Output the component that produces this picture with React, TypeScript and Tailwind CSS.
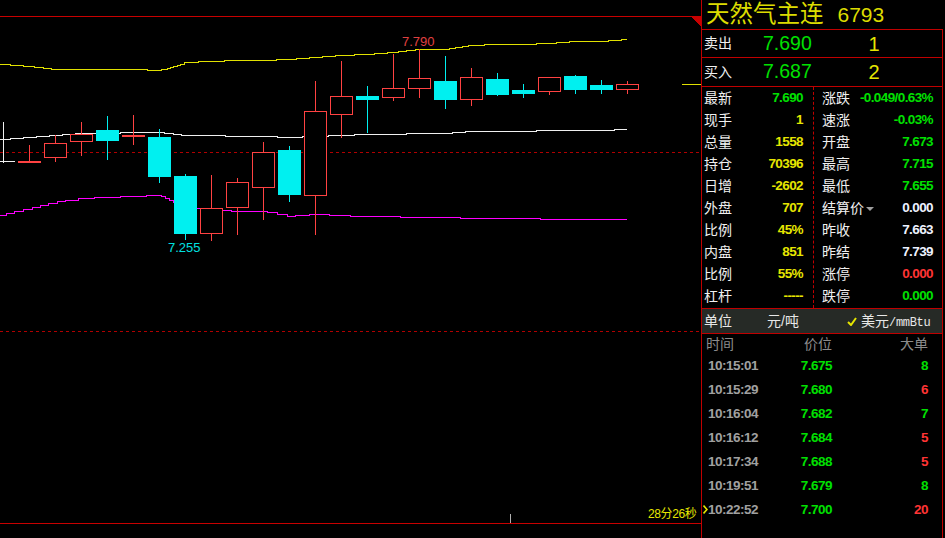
const RED = "#ff4242";
const CYAN = "#00f0f0";

type Candle = { x: number; top: number; bot: number; hi: number; lo: number; c: "r" | "c" };

const candles: Candle[] = [
  { x: 18, top: 161, bot: 163, hi: 145, lo: 162, c: "r" },
  { x: 44, top: 143, bot: 158, hi: 135, lo: 162, c: "r" },
  { x: 70, top: 134, bot: 142, hi: 122, lo: 156, c: "r" },
  { x: 96, top: 130, bot: 141, hi: 116, lo: 160, c: "c" },
  { x: 122, top: 135, bot: 137, hi: 115, lo: 145, c: "r" },
  { x: 148, top: 137, bot: 177, hi: 129, lo: 183, c: "c" },
  { x: 174, top: 176, bot: 234, hi: 174, lo: 240, c: "c" },
  { x: 200, top: 208, bot: 234, hi: 175, lo: 241, c: "r" },
  { x: 226, top: 182, bot: 208, hi: 178, lo: 235, c: "r" },
  { x: 252, top: 152, bot: 188, hi: 142, lo: 220, c: "r" },
  { x: 278, top: 150, bot: 195, hi: 146, lo: 202, c: "c" },
  { x: 304, top: 111, bot: 196, hi: 81, lo: 235, c: "r" },
  { x: 330, top: 96, bot: 115, hi: 61, lo: 138, c: "r" },
  { x: 356, top: 96, bot: 100, hi: 86, lo: 133, c: "c" },
  { x: 382, top: 88, bot: 98, hi: 54, lo: 101, c: "r" },
  { x: 408, top: 78, bot: 89, hi: 49, lo: 98, c: "r" },
  { x: 434, top: 81, bot: 100, hi: 56, lo: 109, c: "c" },
  { x: 460, top: 77, bot: 100, hi: 68, lo: 106, c: "r" },
  { x: 486, top: 79, bot: 95, hi: 73, lo: 96, c: "c" },
  { x: 512, top: 90, bot: 94, hi: 84, lo: 98, c: "c" },
  { x: 538, top: 77, bot: 92, hi: 77, lo: 95, c: "r" },
  { x: 564, top: 76, bot: 90, hi: 75, lo: 94, c: "c" },
  { x: 590, top: 85, bot: 90, hi: 80, lo: 94, c: "c" },
  { x: 616, top: 84, bot: 90, hi: 81, lo: 94, c: "r" },
];

// step segments [x1, x2, row]
const upper: number[][] = [
  [0, 10, 64], [10, 23, 65], [23, 34, 66], [34, 43, 67], [43, 51, 68], [51, 147, 69], [147, 161, 70],
  [161, 167, 69], [167, 170, 68], [170, 173, 67], [173, 177, 66], [177, 180, 65], [180, 184, 64],
  [184, 198, 62], [198, 224, 61], [224, 276, 60], [276, 296, 59], [296, 309, 58], [309, 322, 57],
  [322, 335, 56], [335, 354, 55], [354, 374, 54], [374, 387, 53], [387, 398, 52], [398, 406, 51],
  [406, 415, 50], [415, 449, 49], [449, 455, 48], [455, 462, 47], [462, 468, 46], [468, 484, 45],
  [484, 536, 44], [536, 556, 43], [556, 569, 42], [569, 608, 41], [608, 621, 40], [621, 627, 39],
];
const middle: number[][] = [
  [0, 10, 139], [10, 23, 138], [23, 36, 137], [36, 49, 136], [49, 62, 135], [62, 75, 134], [75, 120, 133],
  [120, 164, 132], [164, 173, 133], [173, 181, 134], [181, 225, 135], [225, 277, 136], [277, 302, 137],
  [302, 328, 136], [328, 354, 135], [354, 406, 134], [406, 452, 133], [452, 465, 132], [465, 536, 131],
  [536, 614, 130], [614, 627, 129],
];
const lower: number[][] = [
  [0, 6, 215], [6, 14, 213], [14, 23, 211], [23, 32, 209], [32, 40, 207], [40, 48, 205], [48, 57, 203],
  [57, 65, 201], [65, 78, 200], [78, 94, 198], [94, 120, 197], [120, 146, 196], [146, 161, 195],
  [161, 165, 196], [165, 169, 198], [169, 173, 200], [173, 177, 202], [177, 181, 204], [181, 185, 206],
  [185, 218, 208], [218, 231, 210], [231, 267, 211], [267, 277, 212], [277, 287, 214], [287, 295, 216],
  [295, 309, 215], [309, 329, 214], [329, 350, 215], [350, 400, 216], [400, 460, 217], [460, 540, 218],
  [540, 627, 219],
];

function steps(segs: number[][]) {
  return segs.map(([a, b, y]) => `${a},${y + 0.5} ${b},${y + 0.5}`).join(" ");
}

function Chart() {
  return (
    <div className="relative h-full w-[701px]">
      <svg width="701" height="538" className="absolute inset-0" shapeRendering="crispEdges">
        <line x1="0" y1="16.5" x2="701" y2="16.5" stroke="#c80000" />
        <polygon points="691,17 701,17 701,27" fill="#c80000" />
        <line x1="0" y1="152.5" x2="701" y2="152.5" stroke="#b00000" strokeDasharray="3 3" />
        <line x1="0" y1="331.5" x2="701" y2="331.5" stroke="#b00000" strokeDasharray="3 3" />
        <line x1="0" y1="523.5" x2="701" y2="523.5" stroke="#c80000" />
        <line x1="510.5" y1="514" x2="510.5" y2="523" stroke="#b0b0b0" />
        <line x1="682" y1="84.5" x2="701" y2="84.5" stroke="#e0e000" />

        <polyline points={steps(upper)} fill="none" stroke="#e0e000" />
        <polyline points={steps(middle)} fill="none" stroke="#f0f0f0" />
        <polyline points={steps(lower)} fill="none" stroke="#ff00ff" />

        <line x1="3.5" y1="122" x2="3.5" y2="163" stroke="#f0f0f0" />
        <line x1="0" y1="161.5" x2="15" y2="161.5" stroke="#f0f0f0" />

        {candles.map((k) => {
          const col = k.c === "r" ? RED : CYAN;
          const doji = k.bot - k.top <= 2;
          return (
            <g key={k.x}>
              <line x1={k.x + 11.5} y1={k.hi} x2={k.x + 11.5} y2={k.lo} stroke={col} />
              {doji || k.c === "c" ? (
                <rect x={k.x} y={k.top} width="23" height={k.bot - k.top} fill={col} />
              ) : (
                <rect
                  x={k.x + 0.5}
                  y={k.top + 0.5}
                  width="22"
                  height={k.bot - k.top - 1}
                  fill="#000"
                  stroke={col}
                />
              )}
            </g>
          );
        })}
      </svg>
      <span className="absolute left-[402px] top-[35px] text-[13px] leading-none text-[#e04040]">7.790</span>
      <span className="absolute left-[168px] top-[241px] text-[13px] leading-none text-[#00e0e0]">7.255</span>
      <span className="absolute left-[648px] top-[508px] text-[12px] leading-none tracking-[-0.4px] text-[#e6e600]">
        28分26秒
      </span>
    </div>
  );
}

const colors = {
  g: "text-[#00e000]",
  y: "text-[#e6e600]",
  w: "text-[#eef2ff]",
  r: "text-[#ff3434]",
};

type C = keyof typeof colors;

const leftStats: [string, string, C][] = [
  ["最新", "7.690", "g"],
  ["现手", "1", "y"],
  ["总量", "1558", "y"],
  ["持仓", "70396", "y"],
  ["日增", "-2602", "y"],
  ["外盘", "707", "y"],
  ["比例", "45%", "y"],
  ["内盘", "851", "y"],
  ["比例", "55%", "y"],
  ["杠杆", "-----", "y"],
];

const rightStats: [string, string, C][] = [
  ["涨跌", "-0.049/0.63%", "g"],
  ["速涨", "-0.03%", "g"],
  ["开盘", "7.673", "g"],
  ["最高", "7.715", "g"],
  ["最低", "7.655", "g"],
  ["结算价", "0.000", "w"],
  ["昨收", "7.663", "w"],
  ["昨结", "7.739", "w"],
  ["涨停", "0.000", "r"],
  ["跌停", "0.000", "g"],
];

const trades: [string, string, string, C][] = [
  ["10:15:01", "7.675", "8", "g"],
  ["10:15:29", "7.680", "6", "r"],
  ["10:16:04", "7.682", "7", "g"],
  ["10:16:12", "7.684", "5", "r"],
  ["10:17:34", "7.688", "5", "r"],
  ["10:19:51", "7.679", "8", "g"],
  ["10:22:52", "7.700", "20", "r"],
];

function QuoteRow({ label, price, qty, last }: { label: string; price: string; qty: string; last?: boolean }) {
  return (
    <div className={`flex items-center border-b border-[#c00000] ${last ? "h-[29px]" : "h-[28px]"}`}>
      <span className="w-[61px] pl-[2px] text-[14px] text-[#f0f0f0]">{label}</span>
      <span className="w-[70px] text-[19.5px] leading-none text-[#00e000]">{price}</span>
      <span className="w-[82px] text-center text-[20px] leading-none text-[#e6e600]">{qty}</span>
    </div>
  );
}

export default function App() {
  return (
    <div className="flex h-[538px] w-[945px] overflow-hidden bg-black font-['Liberation_Sans','Noto_Sans_CJK_SC',sans-serif]">
      <Chart />
      <div className="flex h-full w-[244px] flex-col border-l border-[#c00000]">
        <div className="flex h-[29px] items-center pl-[4px] text-[#dcdc00]">
          <span className="text-[23.5px] leading-none">天然气主连</span>
          <span className="ml-[14px] text-[21px] leading-none">6793</span>
        </div>
        <div className="flex w-[241px] flex-1 flex-col border-t border-r border-[#c00000]">
          <QuoteRow label="卖出" price="7.690" qty="1" />
          <QuoteRow label="买入" price="7.687" qty="2" last />

          <div className="flex h-[222px] border-b border-[#c00000]">
            <div className="flex w-[111px] flex-col">
              {leftStats.map(([l, v, c], i) => (
                <div key={i} className="flex h-[22px] items-center justify-between pl-[2px] pr-[10px]">
                  <span className="text-[14px] text-[#f0f0f0]">{l}</span>
                  <span className={`text-[13.5px] font-bold tracking-[-0.6px] ${colors[c]}`}>{v}</span>
                </div>
              ))}
            </div>
            <div className="flex flex-1 flex-col border-l border-dashed border-[#c00000]">
              {rightStats.map(([l, v, c], i) => (
                <div key={i} className="flex h-[22px] items-center justify-between pl-[8px] pr-[9px]">
                  <span className="flex items-center text-[14px] text-[#f0f0f0]">
                    {l}
                    {l === "结算价" && (
                      <svg width="8" height="5" viewBox="0 0 8 5" className="ml-[2px] mt-[3px]">
                        <polygon points="0,0 8,0 4,4" fill="#a0a0a0" />
                      </svg>
                    )}
                  </span>
                  <span className={`text-[13.5px] font-bold tracking-[-0.6px] ${colors[c]}`}>{v}</span>
                </div>
              ))}
            </div>
          </div>

          <div className="flex h-[25px] items-center border-b border-[#c00000] bg-[#262a26] text-[14px] text-[#e8e8e8]">
            <span className="w-[65px] pl-[2px]">单位</span>
            <span className="w-[80px]">元/吨</span>
            <svg width="10" height="9" viewBox="0 0 10 9" className="mr-[4px]">
              <path d="M1 5 L4 8 L9 1" stroke="#e6e600" strokeWidth="2" fill="none" />
            </svg>
            <span>
              美元<span className="font-['Liberation_Mono',monospace] text-[12px] tracking-[-0.3px]">/mmBtu</span>
            </span>
          </div>

          <div className="flex flex-col">
            <div className="flex h-[20px] items-center text-[14px] text-[#8c8c8c]">
              <span className="w-[92px] pl-[4px]">时间</span>
              <span className="w-[45px] pl-[10px]">价位</span>
              <span className="flex-1 pr-[14px] text-right">大单</span>
            </div>
            {trades.map(([t, p, q, c], i) => (
              <div key={i} className="relative flex h-[24px] items-center text-[13.5px] font-bold tracking-[-0.5px]">
                {i === trades.length - 1 && (
                  <svg width="5" height="9" viewBox="0 0 5 9" className="absolute left-[1px] top-[7px]">
                    <path d="M0.5 0.5 L4 4.5 L0.5 8.5" stroke="#e6e600" strokeWidth="1.6" fill="none" />
                  </svg>
                )}
                <span className="w-[92px] pl-[6px] text-[#a0a0a0]">{t}</span>
                <span className="w-[45px] text-center text-[#00e000]">{p}</span>
                <span className={`flex-1 pr-[14px] text-right ${colors[c]}`}>{q}</span>
              </div>
            ))}
          </div>
        </div>
      </div>
    </div>
  );
}
